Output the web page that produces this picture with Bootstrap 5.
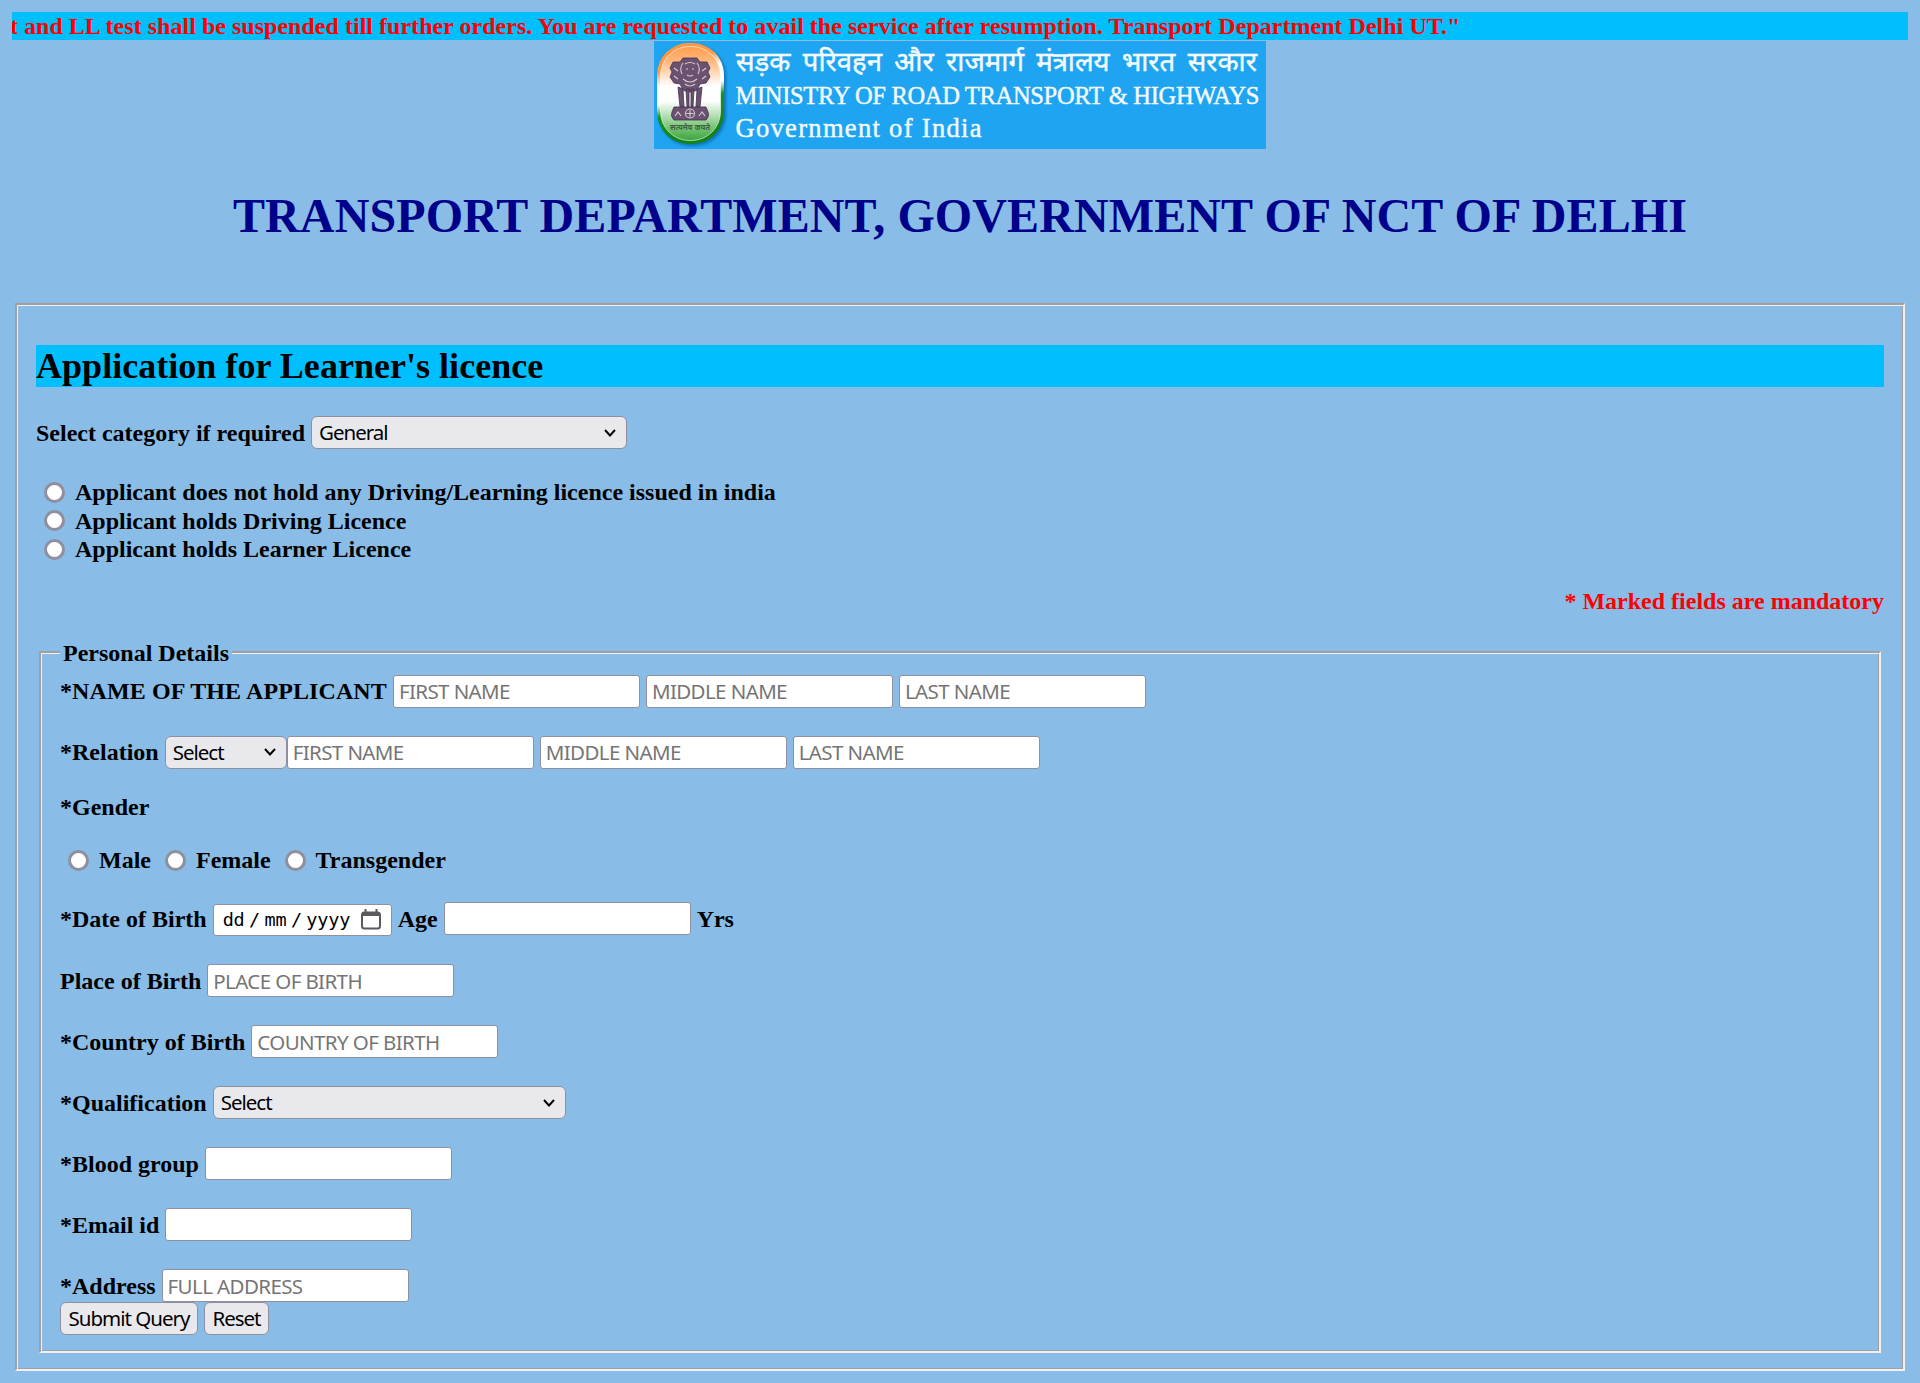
<!DOCTYPE html>
<html lang="en">
<head>
<meta charset="utf-8">
<meta name="viewport" content="width=device-width, initial-scale=1">
<title>Application for Learner's licence</title>
<link href="https://cdn.jsdelivr.net/npm/bootstrap@5.3.0/dist/css/bootstrap.min.css" rel="stylesheet">
<style>
body{background:#89bde8;color:#000;font:bold 24px/28px "Liberation Serif",serif;padding:12px}
.ticker{background:#00bfff;color:red;height:28px;text-indent:-2px;letter-spacing:.025px}
.banner{width:612px;height:108px;margin-top:1px}
.dept{color:#00008b;font-size:48px;line-height:55px;font-weight:bold;letter-spacing:.11px;margin:39px 0 60px}
.groove{border:2px solid;border-color:#a0a0a0 #f0f0f0 #f0f0f0 #a0a0a0;box-shadow:inset 1px 1px #f0f0f0,inset -1px -1px #a0a0a0}
.outer{margin:0 3px;padding:40px 19px 16px;height:1068px}
.formtitle{background:#00bfff;font-size:36px;line-height:43px;height:42px;font-weight:bold;letter-spacing:.03px;margin:0 0 29px}
.line{display:flex;align-items:center;gap:6px;height:33px;margin-bottom:28px}
.inner{margin:0 3px;padding:9px 19px 16px;height:715px}
.inner legend{float:none;width:auto;font-size:24px;line-height:28px;padding:1px 3px 0;height:28px;margin:0;background:#89bde8}
.line .form-control,.line .form-select,.line .btn{font:400 20.5px/27px "Noto Sans",sans-serif;height:33px;border:1px solid #8f8f9d;color:#000;box-shadow:none}
.line .form-control{width:247px;padding:2px 5px;border-radius:3px;background:#fff;letter-spacing:-.6px}
.line .form-control::placeholder{color:#757575}
.line .form-select,.line .btn{background-color:#e9e9ed;border-radius:6px;padding:2px 8px;letter-spacing:-1px}
.line .form-select{padding-left:7px;background-image:url("data:image/svg+xml,%3Csvg xmlns='http://www.w3.org/2000/svg' viewBox='0 0 12 8'%3E%3Cpath d='M1 1l5 5.5L11 1' fill='none' stroke='%23000' stroke-width='2'/%3E%3C/svg%3E");background-size:12px 8px;background-position:right 10px center}
.line .btn{padding:2px 7.5px}
.opt{appearance:none;width:21px;height:21px;border:3px solid #8f8f9d;border-radius:50%;background:#fff;margin:0 10px 0 8px;flex:none}
.choice{display:flex;align-items:center;height:28.6px}
.gender{gap:6px;margin-bottom:28px}
.line .datebox{width:179px;height:32px;display:flex;align-items:center;font:400 18.5px/28px "DejaVu Sans Mono",monospace;letter-spacing:-.2px;padding:0 10px 0 9px;margin-top:2px}
.datebox .sep{margin:0 4.5px}
</style>
<script src="https://cdn.jsdelivr.net/npm/bootstrap@5.3.0/dist/js/bootstrap.bundle.min.js"></script>
</head>
<body>
<div class="ticker overflow-hidden text-nowrap">t and LL test shall be suspended till further orders. You are requested to avail the service after resumption. Transport Department Delhi UT."</div>
<svg class="banner d-block mx-auto" viewBox="0 0 612 108">
  <defs>
    <linearGradient id="rim" x1="0" y1="0" x2="0.25" y2="1"><stop offset="0" stop-color="#ff943d"/><stop offset=".28" stop-color="#ff9a48"/><stop offset=".42" stop-color="#fff"/><stop offset=".58" stop-color="#fff"/><stop offset=".7" stop-color="#16931c"/><stop offset="1" stop-color="#118418"/></linearGradient>
    <linearGradient id="flag" x1="0" y1="0" x2="0" y2="1"><stop offset="0" stop-color="#ff9d4d"/><stop offset=".15" stop-color="#ffb67a"/><stop offset=".42" stop-color="#fff"/><stop offset=".58" stop-color="#fff"/><stop offset=".85" stop-color="#7cc67b"/><stop offset="1" stop-color="#3ca43c"/></linearGradient>
    <filter id="soft"><feGaussianBlur stdDeviation="1.5"/></filter>
  </defs>
  <rect width="612" height="108" fill="#1ea4f0"/>
  <rect x="5" y="4" width="67" height="101" rx="32" fill="#075c9c" opacity=".7" filter="url(#soft)"/>
  <rect x="3" y="2" width="67" height="101" rx="32" fill="url(#rim)"/>
  <rect x="6.500" y="5.500" width="60" height="94" rx="29" fill="url(#flag)" stroke="#fff" stroke-opacity=".6"/>
  <g fill="#6a5270" stroke="#463152" stroke-width=".8">
    <path d="M29 17h14l3 4 7 0 3 6-2 4 2 5-4 6-6 1-3 6q-7 4-14 0l-3-6-6-1-4-6 2-5-2-4 3-6 7 0z"/>
    <path d="M24 46l2 20h4l-1-18zM32 48l1 18h2V48zM37 48v18h2l1-18zM48 46l-2 20h-4l1-18z"/>
    <path d="M20 66h32l2 5q2 4-2 8H20q-4-4-2-8z"/>
  </g>
  <g fill="none" stroke="#d8cbd6" stroke-width="1.1">
    <path d="M29 22q-4 5-1 11M43 22q4 5 1 11M31 23q5-3 10 0M32 28h2M38 28h2M33 34q3 2 6 0M29 38q7 6 14 0M31 43q5 4 10 0M20 27l4 3M52 27l-4 3M20 35l4 3M52 35l-4 3"/>
    <circle cx="36" cy="72.500" r="4.500"/><path d="M36 69v7M32.500 72.500h7M21 75l3-4 3 4M45 75l3-4 3 4"/>
  </g>
  <text x="16" y="89" textLength="40" lengthAdjust="spacingAndGlyphs" font-family="Noto Sans,sans-serif" font-size="8" font-weight="700" fill="#41623f">सत्यमेव जयते</text>
  <g fill="#f3faff" stroke="#f3faff" stroke-width=".45" font-family="Liberation Serif,serif" font-weight="400">
    <text x="82" y="30" textLength="521" lengthAdjust="spacingAndGlyphs" font-family="Noto Sans Devanagari,Noto Sans,sans-serif" font-size="26.500" word-spacing="5">सड़क परिवहन और राजमार्ग मंत्रालय भारत सरकार</text>
    <text x="81.500" y="63" textLength="524" font-size="24.500">MINISTRY OF ROAD TRANSPORT &amp; HIGHWAYS</text>
    <text x="81.500" y="96" textLength="246" font-size="26.500">Government of India</text>
  </g>
</svg>
<h1 class="dept text-center">TRANSPORT DEPARTMENT, GOVERNMENT OF NCT OF DELHI</h1>
<form class="groove outer">
  <h2 class="formtitle">Application for Learner's licence</h2>
  <div class="line"><label for="cat">Select category if required</label><select id="cat" class="form-select" style="width:316px"><option>General</option></select></div>
  <div style="padding-top:1px;margin-bottom:23px">
    <label class="choice"><input class="opt" type="radio" name="hold">Applicant does not hold any Driving/Learning licence issued in india</label>
    <label class="choice"><input class="opt" type="radio" name="hold">Applicant holds Driving Licence</label>
    <label class="choice"><input class="opt" type="radio" name="hold">Applicant holds Learner Licence</label>
  </div>
  <div class="text-end" style="color:red;margin-bottom:23px">* Marked fields are mandatory</div>
  <fieldset class="groove inner">
    <legend>Personal Details</legend>
    <div class="line"><label style="letter-spacing:.1px">*NAME OF THE APPLICANT</label><input class="form-control" placeholder="FIRST NAME"><input class="form-control" placeholder="MIDDLE NAME"><input class="form-control" placeholder="LAST NAME"></div>
    <div class="line" style="margin-bottom:24px"><label>*Relation</label><div class="d-flex"><select class="form-select" style="width:122px"><option>Select</option></select><input class="form-control" placeholder="FIRST NAME"></div><input class="form-control" placeholder="MIDDLE NAME"><input class="form-control" placeholder="LAST NAME"></div>
    <div style="margin-bottom:25px">*Gender</div>
    <div class="d-flex gender"><label class="choice"><input class="opt" type="radio" name="g">Male</label><label class="choice"><input class="opt" type="radio" name="g">Female</label><label class="choice"><input class="opt" type="radio" name="g">Transgender</label></div>
    <div class="line"><label>*Date of Birth</label>
      <div class="form-control datebox"><span>dd</span><span class="sep">/</span><span>mm</span><span class="sep">/</span><span>yyyy</span>
        <svg class="ms-auto" width="20" height="21" viewBox="0 0 20 21"><rect x="1" y="3.500" width="18" height="16" rx="2.500" fill="none" stroke="#5b5b5f" stroke-width="2"/><path d="M1 3h18v4H1zM3.500 0h2v4h-2zM14.500 0h2v4h-2z" fill="#5b5b5f"/></svg></div>
      <label>Age</label><input class="form-control"><span>Yrs</span></div>
    <div class="line" style="margin-top:29px"><label>Place of Birth</label><input class="form-control" placeholder="PLACE OF BIRTH"></div>
    <div class="line"><label>*Country of Birth</label><input class="form-control" placeholder="COUNTRY OF BIRTH"></div>
    <div class="line"><label>*Qualification</label><select class="form-select" style="width:353px"><option>Select</option></select></div>
    <div class="line"><label>*Blood group</label><input class="form-control"></div>
    <div class="line"><label>*Email id</label><input class="form-control"></div>
    <div class="line mb-0"><label>*Address</label><input class="form-control" placeholder="FULL ADDRESS"></div>
    <div class="line mb-0"><button type="button" class="btn">Submit Query</button><button type="reset" class="btn">Reset</button></div>
  </fieldset>
</form>
</body>
</html>
